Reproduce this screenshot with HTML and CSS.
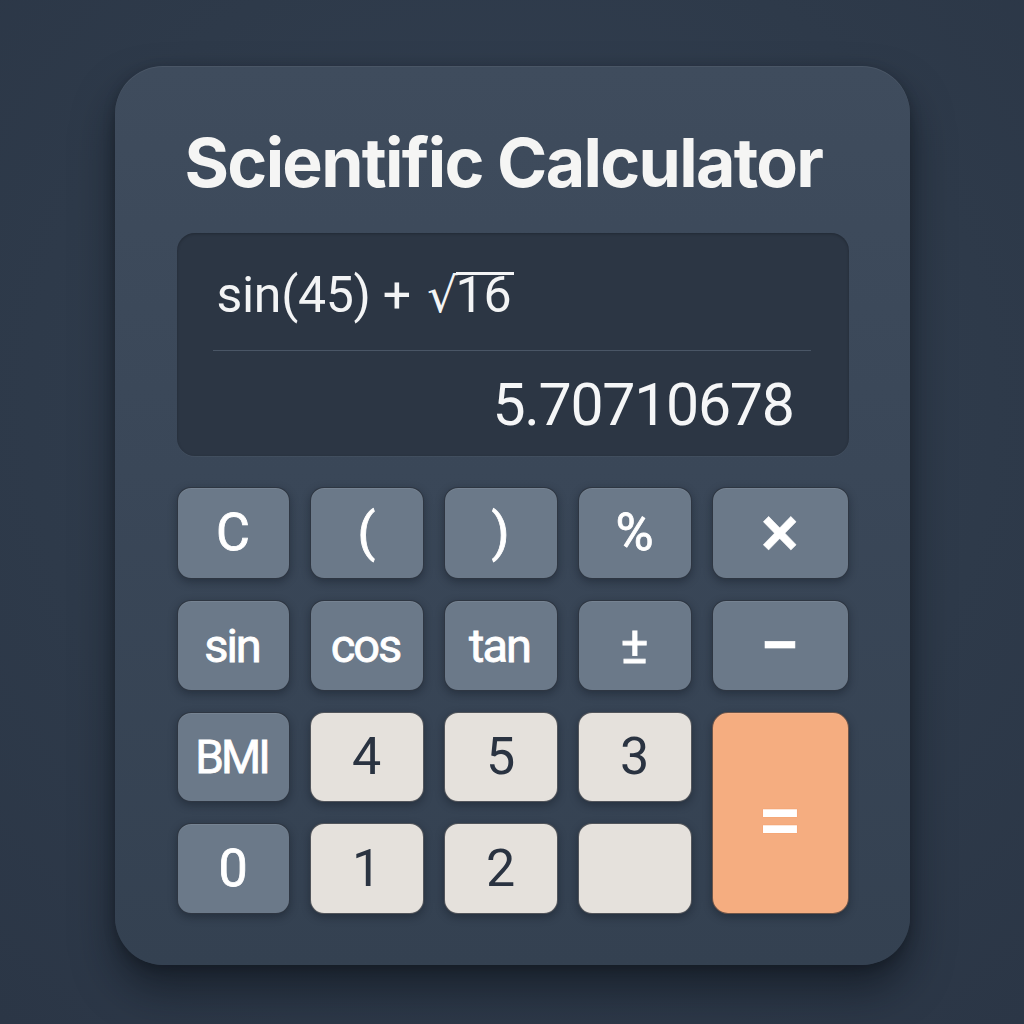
FILE: index.html
```html
<!DOCTYPE html>
<html lang="en">
<head>
<meta charset="utf-8">
<title>Scientific Calculator</title>
<link rel="stylesheet" href="styles.css">
</head>
<body>
<main class="calc">
  <h1 class="title">Scientific Calculator</h1>
  <section class="display">
    <div class="expr">sin(45) + <span class="root">√</span><span class="radicand">16</span></div>
    <div class="divider"></div>
    <div class="result">5.70710678</div>
  </section>
  <div class="keys">
    <button class="key fn">C</button>
    <button class="key fn">(</button>
    <button class="key fn">)</button>
    <button class="key fn">%</button>
    <button class="key op">×</button>
    <button class="key fn word">sin</button>
    <button class="key fn word">cos</button>
    <button class="key fn word">tan</button>
    <button class="key fn">±</button>
    <button class="key op">−</button>
    <button class="key fn word bmi">BMI</button>
    <button class="key num">4</button>
    <button class="key num">5</button>
    <button class="key num">3</button>
    <button class="key eq">=</button>
    <button class="key fn">0</button>
    <button class="key num">1</button>
    <button class="key num">2</button>
    <button class="key num"></button>
  </div>
</main>
</body>
</html>
```
FILE: styles.css
```css
html, body {
  margin: 0;
  padding: 0;
}
body {
  width: 1024px;
  height: 1024px;
  background: radial-gradient(circle at 50% 40%, #334052 0%, #2e3a4a 60%, #2b3646 100%);
  display: flex;
  justify-content: center;
  align-items: flex-start;
  padding-top: 66px;
  box-sizing: border-box;
  font-family: Roboto, "Liberation Sans", sans-serif;
}
.calc {
  width: 795px;
  height: 899px;
  box-sizing: border-box;
  padding: 62px 61px 50px 62px;
  border-radius: 48px;
  background: linear-gradient(180deg, #3f4c5d 0%, #3a4758 45%, #344151 100%);
  box-shadow: 0 24px 40px rgba(10, 14, 22, 0.55), 0 4px 12px rgba(0,0,0,0.25), inset 0 1px 0 rgba(255,255,255,0.06);
  display: flex;
  flex-direction: column;
}
.title {
  margin: 0 0 37px 8px;
  font-family: Inter, "Liberation Sans", sans-serif;
  font-weight: 700;
  font-size: 68px;
  line-height: 68px;
  letter-spacing: -1.7px;
  color: #f5f5f4;
}
.display {
  height: 223px;
  box-sizing: border-box;
  background: #2c3644;
  border-radius: 18px;
  padding-top: 37px;
  box-shadow: inset 0 1px 3px rgba(0,0,0,0.25), 0 1px 0 rgba(255,255,255,0.04);
  display: flex;
  flex-direction: column;
}
.expr {
  padding-left: 40px;
  font-size: 50px;
  line-height: 50px;
  color: #f3f4f5;
  letter-spacing: -0.3px;
  display: flex;
  align-items: baseline;
  white-space: pre;
}
.root {
  font-family: "DejaVu Sans", sans-serif;
  font-size: 48px;
  letter-spacing: 0;
  margin-left: 4px;
}
.radicand {
  border-top: 3px solid #f3f4f5;
  line-height: 40px;
  margin-left: -2px;
  padding-right: 3px;
}
.divider {
  height: 1px;
  margin: 30px 38px 0 36px;
  background: #4a5666;
}
.result {
  margin-top: 24px;
  padding-right: 55px;
  text-align: right;
  font-size: 59px;
  line-height: 59px;
  font-weight: 400;
  letter-spacing: -1.3px;
  color: #f5f6f7;
}
.keys {
  margin-top: 31px;
  display: grid;
  grid-template-columns: 113px 114px 114px 114px 137px;
  grid-template-rows: 92px 91px 90px 91px;
  column-gap: 20px;
  row-gap: 21px;
}
.key {
  border: 1px solid rgba(20, 26, 36, 0.7);
  border-radius: 14px;
  font-family: Roboto, "Liberation Sans", sans-serif;
  font-size: 52px;
  line-height: 1;
  padding: 0;
  display: flex;
  align-items: center;
  justify-content: center;
  box-shadow: 0 3px 8px rgba(10, 14, 22, 0.35), inset 0 1px 0 rgba(255,255,255,0.08);
}
.fn, .op {
  background: #6b7989;
  color: #ffffff;
  font-weight: 400;
  -webkit-text-stroke: 0.8px #ffffff;
}
.word {
  font-size: 47px;
  letter-spacing: -2px;
  text-indent: -2px;
}
.bmi {
  font-size: 46px;
  letter-spacing: -3px;
  text-indent: -3px;
}
.op {
  font-size: 72px;
  font-weight: 500;
  -webkit-text-stroke: 0.5px #ffffff;
}
.num {
  background: #e5e1dc;
  color: #2a3341;
  font-weight: 400;
}
.eq {
  grid-column: 5;
  grid-row: 3 / span 2;
  background: #f5ad80;
  color: #ffffff;
  font-family: Inter, sans-serif;
  font-size: 72px;
  font-weight: 600;
  padding-top: 6px;
  border-radius: 16px;
  border-color: rgba(20, 26, 36, 0.6);
  text-shadow: 0 0 1px #f07a3a;
}
```
